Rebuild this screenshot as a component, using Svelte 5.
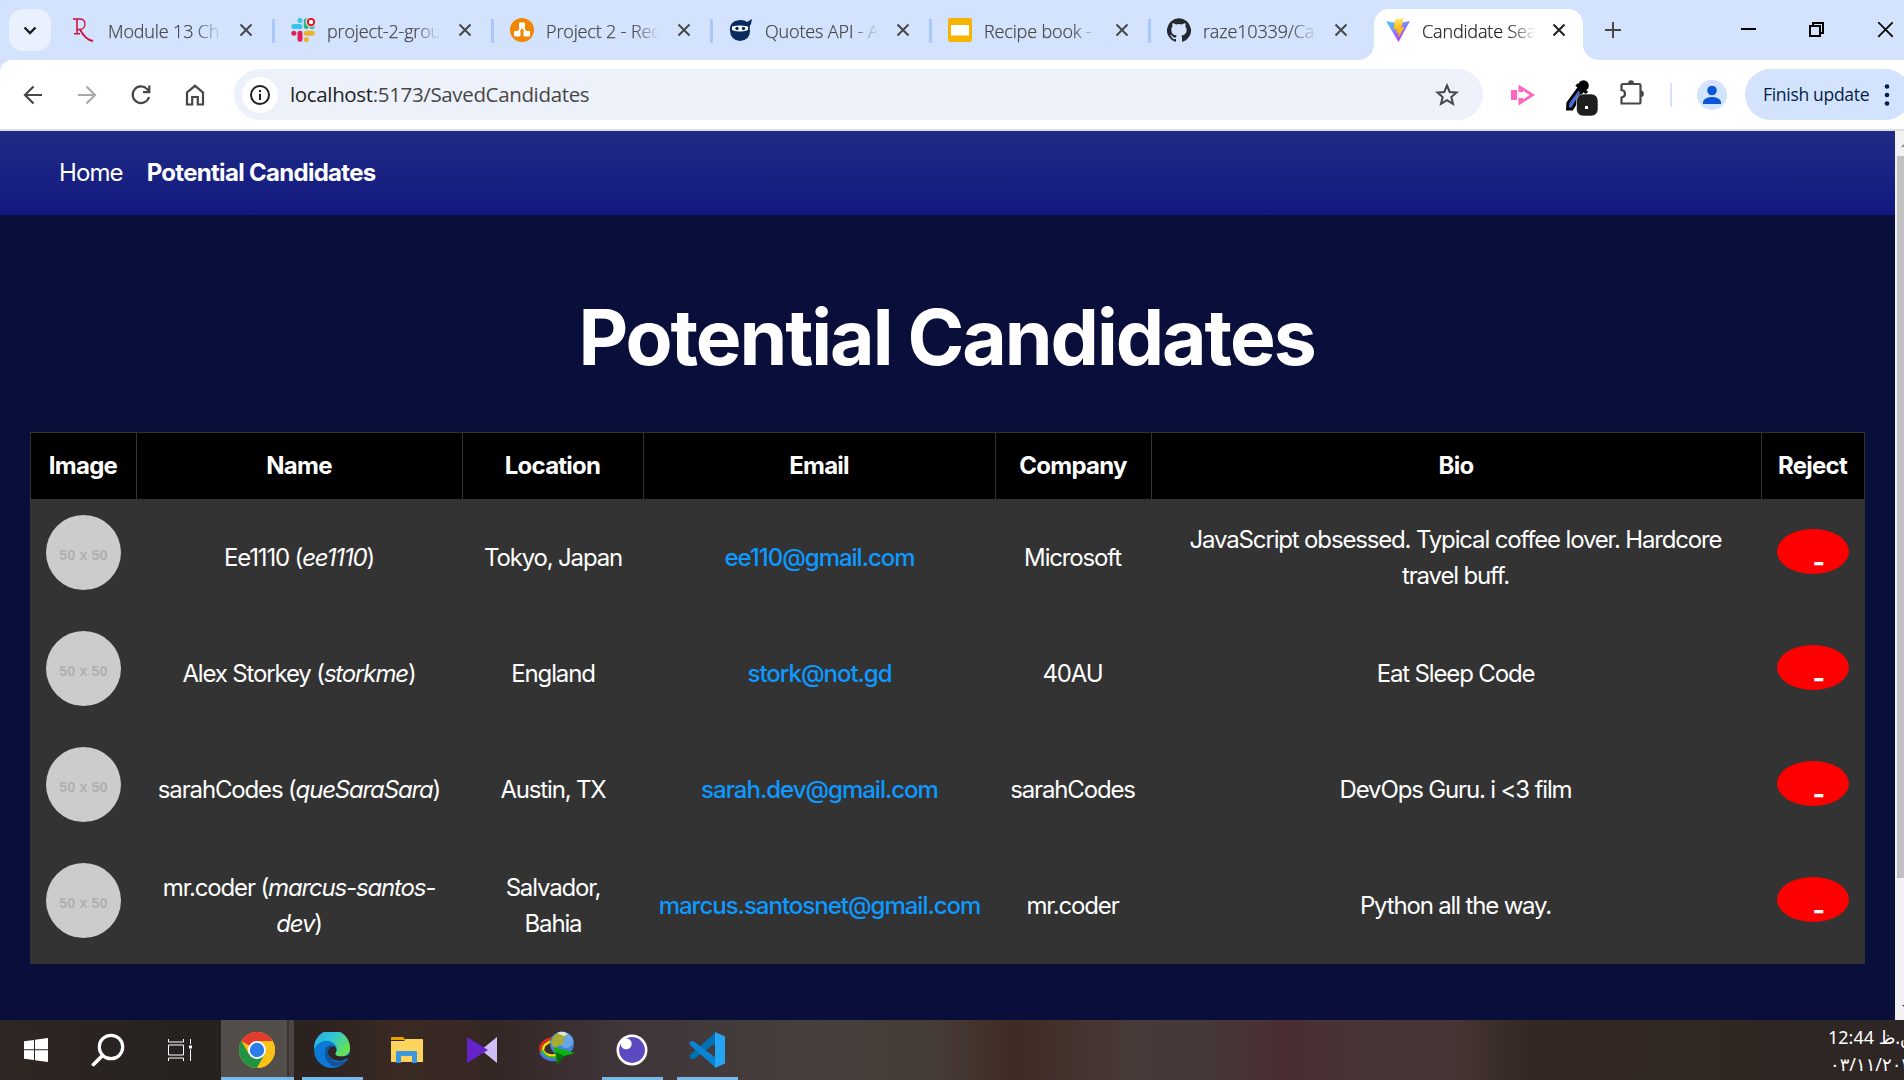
<script>
  const tabs = [
    { icon: 'r', title: 'Module 13 Cha' },
    { icon: 'slack', title: 'project-2-group' },
    { icon: 'draw', title: 'Project 2 - Reci' },
    { icon: 'ninja', title: 'Quotes API - AP' },
    { icon: 'slides', title: 'Recipe book - ' },
    { icon: 'github', title: 'raze10339/Cand' },
    { icon: 'vite', title: 'Candidate Sear', active: true }
  ];
  const heads = ['Image', 'Name', 'Location', 'Email', 'Company', 'Bio', 'Reject'];
  const rows = [
    { name: 'Ee1110', login: 'ee1110', loc: 'Tokyo, Japan', email: 'ee110@gmail.com', company: 'Microsoft', bio: 'JavaScript obsessed. Typical coffee lover. Hardcore travel buff.' },
    { name: 'Alex Storkey', login: 'storkme', loc: 'England', email: 'stork@not.gd', company: '40AU', bio: 'Eat Sleep Code' },
    { name: 'sarahCodes', login: 'queSaraSara', loc: 'Austin, TX', email: 'sarah.dev@gmail.com', company: 'sarahCodes', bio: 'DevOps Guru. i <3 film' },
    { name: 'mr.coder', login: 'marcus-santos-dev', loc: 'Salvador, Bahia', email: 'marcus.santosnet@gmail.com', company: 'mr.coder', bio: 'Python all the way.' }
  ];
</script>

{#snippet favicon(kind)}
  <svg class="fav" viewBox="0 0 24 24">
    {#if kind === 'r'}
      <g fill="none" stroke="#d0103f"><path d="M1 1H7.500Q13 1 13 6T7.500 11.500H5" stroke-width="1.300" /><path d="M5 1V15.500M2 15.800H8" stroke-width="1.600" /><path d="M8 11.500Q13.500 22 21 23" stroke-width="1.800" /></g>
    {:else if kind === 'slack'}
      <g stroke-width="5" stroke-linecap="round">
        <path d="M2.800 8.600H9" stroke="#36c5f0" /><path d="M9 2.500V2.600" stroke="#36c5f0" />
        <path d="M15.300 2.800V8.600" stroke="#2eb67d" /><path d="M21 8.600H21.100" stroke="#2eb67d" />
        <path d="M15.300 15.300H21.300" stroke="#ecb22e" /><path d="M15.300 21.400V21.500" stroke="#ecb22e" />
        <path d="M9 15.300V21.300" stroke="#e01e5a" /><path d="M2.800 15.300H2.900" stroke="#e01e5a" />
      </g>
      <circle cx="20" cy="4" r="5.300" fill="#d3e3fd" /><circle cx="20" cy="4" r="3.200" fill="#fff" stroke="#e8141c" stroke-width="2" />
    {:else if kind === 'draw'}
      <circle cx="12" cy="12" r="12" fill="#f08705" />
      <path d="M12 8L7 16M12 8L17 16" stroke="#fff" stroke-width="2" />
      <g fill="#fff"><rect x="9" y="4.500" width="6" height="5.500" rx="1" /><rect x="4" y="13" width="6.500" height="5.500" rx="1" /><rect x="13.500" y="13" width="6.500" height="5.500" rx="1" /></g>
    {:else if kind === 'ninja'}
      <path d="M1 13Q0 3 11 2Q16 2 18 4L23 1L22 6Q20 8 21 13Q21 22 11 23Q1.500 22 1 13Z" fill="#0b2a5e" />
      <path d="M3 8.500Q11 6.500 19 8.500V12Q11 15 3 12Z" fill="#fff" /><circle cx="8" cy="10.500" r="1.700" fill="#0b2a5e" /><circle cx="14.500" cy="10.500" r="1.700" fill="#0b2a5e" />
    {:else if kind === 'slides'}
      <rect width="24" height="24" rx="2.500" fill="#f5b400" /><rect x="3" y="7" width="18" height="10.500" fill="#fff" />
    {:else if kind === 'github'}
      <path fill="#24292f" d="M12 .3a12 12 0 0 0-3.800 23.400c.600.100.800-.300.800-.600v-2c-3.300.700-4-1.600-4-1.600-.600-1.400-1.400-1.800-1.400-1.800-1-.700.100-.700.100-.700 1.200 0 1.900 1.200 1.900 1.200 1 1.800 2.800 1.300 3.500 1 0-.800.400-1.300.700-1.600-2.700-.300-5.500-1.300-5.500-6 0-1.200.500-2.300 1.300-3.100-.200-.400-.600-1.600 0-3.200 0 0 1-.300 3.400 1.200a11.500 11.500 0 0 1 6 0c2.300-1.500 3.300-1.200 3.300-1.200.600 1.600.200 2.800 0 3.200.900.800 1.300 1.900 1.300 3.200 0 4.600-2.800 5.600-5.500 5.900.500.400.900 1 .900 2.200v3.300c0 .300.100.700.800.600A12 12 0 0 0 12 .3" />
    {:else}
      <defs><linearGradient id="vg" x1="0" y1="0" x2=".6" y2="1"><stop offset="0" stop-color="#41d1ff" /><stop offset="1" stop-color="#bd34fe" /></linearGradient><linearGradient id="vy" x1="0" y1="0" x2="0" y2="1"><stop offset="0" stop-color="#ffea83" /><stop offset=".4" stop-color="#ffc520" /><stop offset="1" stop-color="#ffa800" /></linearGradient></defs>
      <path d="M0 3L12 5.200L24 3L12.500 24Z" fill="url(#vg)" /><path d="M17 0L9 1.500L7.500 11.500L11 11L10 15L12.500 14.500L12 20L18.500 9L15 9.500L17 4.500Z" fill="url(#vy)" />
    {/if}
  </svg>
{/snippet}

<div class="screen">
  <div class="strip">
    <div class="search"><svg width="14" height="9" viewBox="0 0 14 9"><path d="M1.500 1.500L7 7L12.500 1.500" fill="none" stroke="#1c1c1f" stroke-width="2.400" /></svg></div>
    <div class="tabs">
      {#each tabs as t}
        <div class="tab" class:active={t.active}>
          {@render favicon(t.icon)}
          <span class="title">{t.title}</span>
          <svg class="x" width="14" height="14" viewBox="0 0 14 14"><path d="M1.500 1.500L12.500 12.500M12.500 1.500L1.500 12.500" stroke="currentColor" stroke-width="2" /></svg>
        </div>
      {/each}
    </div>
    <svg class="plus" width="16" height="16" viewBox="0 0 16 16"><path d="M8 0V16M0 8H16" stroke="#474747" stroke-width="2" /></svg>
    <div class="win">
      <svg width="16" height="16" viewBox="0 0 16 16"><path d="M0 7H15" stroke="#000" stroke-width="2" /></svg>
      <svg width="16" height="16" viewBox="0 0 16 16"><path d="M1 4H11V14H1ZM4 4V1H14V11H11" fill="none" stroke="#000" stroke-width="2" /></svg>
      <svg width="16" height="16" viewBox="0 0 16 16"><path d="M1.200 .200L15.800 14.800M15.800 .200L1.200 14.800" stroke="#000" stroke-width="1.700" /></svg>
    </div>
  </div>

  <div class="toolbar">
    <div class="navs">
      <svg viewBox="0 0 24 24"><path d="M21 12H4.500M12.500 3.500L4 12L12.500 20.500" stroke="#474747" /></svg>
      <svg viewBox="0 0 24 24"><path d="M3 12H19.500M11.500 3.500L20 12L11.500 20.500" stroke="#a9a9a9" /></svg>
      <svg viewBox="0 0 24 24"><path d="M20 14A8.300 8.300 0 1 1 18 6L20.500 8.800M20.300 2.500V9.200H14" stroke="#474747" /></svg>
      <svg viewBox="0 0 24 24"><path d="M4 21.500V9.500L12 2.800L20 9.500V21.500H14.800V14H9.200V21.500Z" stroke="#474747" /></svg>
    </div>
    <div class="url">
      <span class="info"><svg width="22" height="22" viewBox="0 0 22 22"><circle cx="11" cy="11" r="9" fill="none" stroke="#1f1f1f" stroke-width="2" /><path d="M11 9.700V16M11 6V8" stroke="#1f1f1f" stroke-width="2" /></svg></span>
      <span class="addr"><b>localhost</b>:5173/SavedCandidates</span>
      <svg class="star" width="24" height="24" viewBox="0 0 24 24"><path d="M12 2.500L14.700 9L21.500 9.500L16.300 14L18 20.800L12 17.100L6 20.800L7.700 14L2.500 9.500L9.300 9Z" fill="none" stroke="#474747" stroke-width="2" /></svg>
    </div>
    <svg class="ext" width="26" height="24" viewBox="0 0 26 24"><path d="M1 7H7V17H1ZM8.500 1.500L25 12L8.500 22.500Z" fill="#fd69bf" /><path d="M8.500 9H13V7.500L19.500 12L13 16.500V15H8.500Z" fill="#fff" /></svg>
    <svg class="drop" width="34" height="42" viewBox="0 0 34 42"><path d="M1.500 30L1.800 24L12 10L16 13L8 27L6 30Z" fill="#4b69d8" stroke="#000" stroke-width="2.800" /><path d="M10.500 5.500L21 14" stroke="#000" stroke-width="3.500" /><circle cx="17.500" cy="6.500" r="5.300" /><rect x="10.500" y="15" width="21.500" height="22" rx="6.500" fill="#1e1e1e" stroke="#fff" stroke-width=".6" /><rect x="19" y="27" width="3" height="3" fill="#fff" /></svg>
    <svg class="puz" width="26" height="26" viewBox="0 0 26 26"><path d="M2.500 5.500Q2.500 4 4 4H20Q21.500 4 21.500 5.500V22Q21.500 23.500 20 23.500H2.500V17.500Q6 17 6 13.700T2.500 10Z" fill="none" stroke="#474747" stroke-width="2.200" /><path d="M9 3.500A3 3.200 0 0 1 15 3.500M21.800 10.500A3 3.200 0 0 1 21.800 17" fill="#474747" /></svg>
    <span class="vsep"></span>
    <svg class="prof" width="30" height="30" viewBox="0 0 30 30"><circle cx="15" cy="15" r="15" fill="#d3e3fd" /><circle cx="15" cy="10.500" r="4.800" fill="#0b57d0" /><path d="M6 24V21.500Q8 17 15 17T24 21.500V24Z" fill="#0b57d0" /></svg>
    <div class="update"><span>Finish update</span><svg width="6" height="24" viewBox="0 0 6 24"><g fill="#041e49"><circle cx="3" cy="3.500" r="2.300" /><circle cx="3" cy="12" r="2.300" /><circle cx="3" cy="20.500" r="2.300" /></g></svg></div>
  </div>

  <div class="viewport">
    <div class="page">
      <nav><span>Home</span><span class="cur">Potential Candidates</span></nav>
      <h1>Potential Candidates</h1>
      <table>
        <colgroup><col class="c1" /><col class="c2" /><col class="c3" /><col class="c4" /><col class="c5" /><col class="c6" /><col class="c7" /></colgroup>
        <thead><tr>{#each heads as h}<th>{h}</th>{/each}</tr></thead>
        <tbody>
          {#each rows as r}
            <tr>
              <td><div class="avatar">50 x 50</div></td>
              <td>{r.name} (<em>{r.login}</em>)</td>
              <td>{r.loc}</td>
              <td class="mail">{r.email}</td>
              <td>{r.company}</td>
              <td>{r.bio}</td>
              <td><div class="reject"><span>-</span></div></td>
            </tr>
          {/each}
        </tbody>
      </table>
    </div>
    <div class="scroll">
      <svg class="arrow" width="7" height="25" viewBox="0 0 7 25"><path d="M4 16L7 13V16Z" fill="#8c8c8c" /></svg>
      <div class="thumb"></div>
      <svg class="arrow" width="7" height="25" viewBox="0 0 7 25"><path d="M5 10L7 12V10Z" fill="#444" /></svg>
    </div>
  </div>

  <div class="taskbar">
    <div class="app small"><svg width="24" height="24" viewBox="0 0 24 24"><path d="M0 3.300L10 2V11.300H0ZM11 1.800L24 0V11.300H11ZM0 12.300H10V22L0 20.700ZM11 12.300H24V24L11 22.200Z" fill="#fff" /></svg></div>
    <div class="app small"><svg width="34" height="34" viewBox="0 0 34 34"><circle cx="20" cy="14" r="11.700" fill="none" stroke="#fff" stroke-width="3.200" /><path d="M11.500 22.500L2.500 31.500" stroke="#fff" stroke-width="3.800" stroke-linecap="round" /></svg></div>
    <div class="app small"><svg width="24" height="24" viewBox="0 0 24 24"><path d="M.5 1V4H15.500V1M.5 23V20H15.500V23M.5 7H15.500V17H.500ZM22.500 1V6M22.500 11.500V23" fill="none" stroke="#fff" /><rect x="21" y="7.500" width="3" height="3" fill="#fff" /></svg></div>
    <div class="app chrome"><svg width="36" height="36" viewBox="0 0 36 36"><circle cx="18" cy="18" r="18" fill="#fbc116" /><path d="M18 18L2.400 9A18 18 0 0 1 33.600 9Z" fill="#e33b2e" /><path d="M2.400 9A18 18 0 0 0 18 36L25.800 22.500L18 18L10.200 22.500Z" fill="#229342" /><path d="M18 9H33.600A18 18 0 0 1 18 36L25.800 22.500Z" fill="#fbc116" /><circle cx="18" cy="18" r="9" fill="#fff" /><circle cx="18" cy="18" r="7.200" fill="#2b7de9" /></svg></div>
    <div class="app run"><svg width="36" height="36" viewBox="0 0 36 36"><defs><linearGradient id="eg" x1="0" y1="0" x2="1" y2=".6"><stop offset="0" stop-color="#28a8ea" /><stop offset=".5" stop-color="#30c7d4" /><stop offset="1" stop-color="#68e150" /></linearGradient></defs><circle cx="18" cy="18" r="18" fill="#0c79d4" /><path d="M0 17A18 18 0 0 1 36 15Q37 23 28 24.500Q20 25 21.500 21Q24 18 22 14Q18 8 10 9Q3 11 0 17Z" fill="url(#eg)" /><path d="M12 16Q8 27 18 34Q27 36 33 28Q20 33 17 26Q14 20 19 14Q14 12 12 16Z" fill="#11529c" /><path d="M20 14Q13 16 14 21Q17 30 28 28.500L34 26L38 27V20Q34 25 28 24.500Q20 24.500 21.500 21Q24 17 20 14Z" fill="#2f2421" /></svg></div>
    <div class="app"><svg width="32" height="28" viewBox="0 0 32 28"><path d="M0 2Q0 1 1 1H12L15 4H0Z" fill="#e8a200" /><path d="M0 5H13L15 3H31Q32 3 32 4V26H0Z" fill="#ffd45e" /><path d="M5 27V16Q5 15 6.500 15H24.500Q26 15 26 16V27H21V20H10V27Z" fill="#3a96dd" /></svg></div>
    <div class="app"><svg width="30" height="28" viewBox="0 0 30 28"><path d="M30 1V27L14 14Z" fill="#cfbdf5" /><path d="M0 1L21 14L0 27Z" fill="#6623cc" /></svg></div>
    <div class="app"><svg class="idm" width="36" height="34" viewBox="0 0 36 34"><g fill="none" stroke-width="2.600"><path d="M13 7Q-1 11 2 21" stroke="#e32d16" /><path d="M14 9.500Q3 13 4 20Q8 26 18 24" stroke="#f7d90f" /><path d="M2.500 19Q6 29 19 26" stroke="#32bd28" /><path d="M1.500 21.500Q7 31 20 28.500" stroke="#4c72ef" /></g><circle cx="23" cy="12.500" r="12" fill="#3f85d8" /><circle cx="27" cy="10" r="7" fill="#6aa5e8" /><path d="M12 12Q13 3 22 1L28 4L24 8L25 12L18 16Q15 19 12 12Z" fill="#a6ad31" /><path d="M18 2Q24 -1 29 3L25 5Z" fill="#e4e8dc" /><path d="M15 16L36 22L25 25L18 33Z" fill="#08b40c" /><path d="M17 21L25 25L18 33Z" fill="#086d0c" /></svg></div>
    <div class="app run"><svg width="32" height="32" viewBox="0 0 32 32"><circle cx="16" cy="16" r="14.200" fill="#5c4bc0" stroke="#fff" stroke-width="2.600" /><circle cx="10.200" cy="9.800" r="5.500" fill="#fff" /></svg></div>
    <div class="app run"><svg width="36" height="36" viewBox="0 0 36 36"><path d="M27 0V11L5 27Q3 28 1.500 26.500L.500 25Q0 23.500 1.500 22.500Z" fill="#0070b5" /><path d="M1.500 13.500L.500 11.500Q0 10.500 1.500 9.500Q3 8.500 5 9.500L27 26V36Z" fill="#0a84d0" /><path d="M26 0L36 4.500V31.500L26 36Z" fill="#25a4f3" /></svg></div>
    <div class="clock"><span>12:44 <bdi>ق.ظ</bdi></span><span class="date">۰۳/۱۱/۲۰۲۴</span></div>
  </div>
</div>

<style>
  :global(body) { margin: 0; overflow: hidden; }
  .screen { width: 1904px; height: 1080px; display: flex; flex-direction: column; overflow: hidden; background: #d3e3fd; font-family: "Open Sans", "Noto Sans", sans-serif; }
  .screen * { box-sizing: border-box; }
  svg { display: block; flex: none; }

  .strip { height: 60px; flex: none; display: flex; background: #d3e3fd; }
  .search { width: 42px; height: 42px; margin: 9px 0 0 9px; border-radius: 14px; background: #e9f0fe; display: flex; align-items: center; justify-content: center; flex: none; }
  .tabs { display: flex; padding-left: 9px; }
  .tab { width: 219px; height: 60px; display: flex; align-items: center; padding-left: 12px; position: relative; color: #474747; flex: none; }
  .tab:not(.active)::after { content: ""; width: 3px; height: 24px; border-radius: 1px; background: #a8c7fa; position: absolute; right: 4px; top: 19px; }
  .fav { width: 24px; height: 24px; }
  .title { width: 112px; margin-left: 12px; font-size: 18px; font-weight: 300; letter-spacing: -0.15px; line-height: 24px; white-space: nowrap; overflow: hidden; mask-image: linear-gradient(to right, #000 78%, transparent 102%); margin-top: 1px; -webkit-text-stroke: 0.25px currentColor; }
  .tab:nth-child(6)::after { display: none; }
  .x { margin-left: 19px; }
  .tab.active { width: 209px; height: 51px; margin-top: 9px; background: #fff; border-radius: 15px 15px 0 0; color: #1f1f1f; padding-bottom: 9px; }
  .tab.active .x { margin-left: 18px; }
  .tab.active::before, .tab.active::after { content: ""; position: absolute; bottom: 0; width: 15px; height: 15px; }
  .tab.active::before { left: -15px; background: radial-gradient(circle at 0 0, transparent 14.5px, #fff 15px); }
  .tab.active::after { display: block; right: -15px; background: radial-gradient(circle at 100% 0, transparent 14.5px, #fff 15px); }
  .plus { margin: 22px 0 0 22px; }
  .win { margin-left: auto; display: flex; gap: 52px; padding: 22px 11px 0 0; }

  .toolbar { height: 71px; flex: none; background: #fff; border-bottom: 2px solid #dedede; border-top-left-radius: 12px; display: flex; align-items: center; }
  .navs { display: flex; gap: 30px; padding-left: 21px; width: 234px; flex: none; }
  .navs svg { width: 24px; height: 24px; fill: none; stroke-width: 2.2; }
  .url { width: 1249px; height: 51px; flex: none; border-radius: 26px; background: #ecf1fa; display: flex; align-items: center; padding: 0 24px 0 8px; }
  .info { width: 36px; height: 36px; border-radius: 50%; background: #fff; display: flex; align-items: center; justify-content: center; }
  .addr { margin: -2px 0 0 12px; font-size: 20.500px; color: #474747; letter-spacing: -0.35px; white-space: nowrap; }
  .addr b { font-weight: 400; color: #1f1f1f; }
  .star { margin-left: auto; }
  .ext { margin-left: 27px; }
  .drop { margin: 11px 0 0 30px; }
  .puz { margin-left: 19px; margin-top: -4px; }
  .vsep { width: 2px; height: 24px; margin-left: 25px; background: #d3e3fd; flex: none; }
  .prof { margin-left: 25px; }
  .update { width: 166px; height: 51px; margin-left: 18px; border-radius: 26px; background: #d3e3fd; color: #041e49; display: flex; align-items: center; flex: none; padding-left: 18px; font-size: 17.500px; white-space: nowrap; }
  .update span { width: 121px; letter-spacing: -0.3px; margin-top: -2px; }

  .viewport { height: 889px; flex: none; display: flex; background: #0a0e3a; }
  .page { width: 1895px; font-family: Inter, sans-serif; font-size: 24px; line-height: 36px; color: #fff; letter-spacing: -1.16px; }
  nav { height: 84px; padding: 24px 0 0 59px; display: flex; gap: 24px; background: linear-gradient(#1f2c85, #13187f); letter-spacing: -0.9px; }
  .cur { font-weight: 700; letter-spacing: -0.7px; }
  h1 { margin: 81px 0 0; padding-right: 2px; height: 84px; font-size: 76.800px; line-height: 84px; text-align: center; font-weight: 700; letter-spacing: -2.05px; }
  table { margin: 52px 0 0 30px; width: 1835px; table-layout: fixed; border-collapse: collapse; background: #333; text-align: center; }
  .c1 { width: 106px; } .c2 { width: 326px; } .c3 { width: 181px; } .c4 { width: 352px; } .c5 { width: 156px; } .c6 { width: 610px; } .c7 { width: 103px; }
  th { height: 67px; padding: 0 1px 0 0; background: #000; border: 1px solid #333; font-weight: 700; letter-spacing: -0.75px; }
  td { height: 116px; padding: 0 15px; vertical-align: middle; }
  td:nth-child(2) { padding: 0 15px 0 14px; }
  td:nth-child(3) { padding: 0 20px; }
  td:nth-child(5) { padding: 0 16px 0 14px; }
  td:nth-child(6) { padding: 0 37px 0 35px; }
  .mail { padding: 0 14px; color: #0d99ff; white-space: nowrap; font-weight: 500; letter-spacing: -1px; }
  .avatar { width: 75px; height: 75px; border-radius: 50%; background: #ccc; color: #b0b0b0; font: 700 14.500px/80px "Liberation Sans", sans-serif; letter-spacing: 0; margin: -10px 0 0 0; padding-left: 1px; }
  .reject { width: 72px; height: 45px; margin: -13px 0 0 0; border-radius: 50%; background: red; display: flex; align-items: flex-end; padding: 0 0 0 36px; font-weight: 700; font-size: 27px; line-height: 22px; }

  .scroll { width: 9px; background: #f1f1f1; display: flex; flex-direction: column; align-items: flex-end; }
  .thumb { width: 7px; height: 722px; background: #c1c1c1; margin-bottom: auto; }

  .taskbar { height: 60px; flex: none; display: flex; background: linear-gradient(90deg, #2e2623 0, #26211f 200px, #2c221f 310px, #3a2a23 400px, #352725 500px, #40353a 620px, #463f3b 816px, #463c38 930px, #402b23 1016px, #483a38 1130px, #46393a 1200px, #4a2e33 1282px, #463635 1390px, #463635 1450px, #342822 1531px, #2d2624 1904px); }
  .app { width: 75px; flex: none; display: flex; align-items: center; justify-content: center; }
  .small { width: 72px; }
  .chrome { width: 73px; margin-left: 5px; padding: 3px 1px 0 0; background: linear-gradient(90deg, #544e4b 66px, #393432 66px, #393432 68px, #4a4442 68px); border-bottom: 3px solid #76b9ed; }
  .run { background: linear-gradient(#76b9ed, #76b9ed) 8px 100% / 61px 3px no-repeat; }
  .idm { margin-top: -5px; }
  .clock { margin-left: auto; width: 76px; flex: none; color: #fff; font-size: 18px; line-height: 28px; padding-top: 3px; display: flex; flex-direction: column; white-space: nowrap; overflow: hidden; font-family: "Noto Sans", "DejaVu Sans", sans-serif; letter-spacing: -0.8px; }
  .date { direction: ltr; unicode-bidi: bidi-override; padding-left: 2px; letter-spacing: -2.4px; line-height: 26px; }
</style>
